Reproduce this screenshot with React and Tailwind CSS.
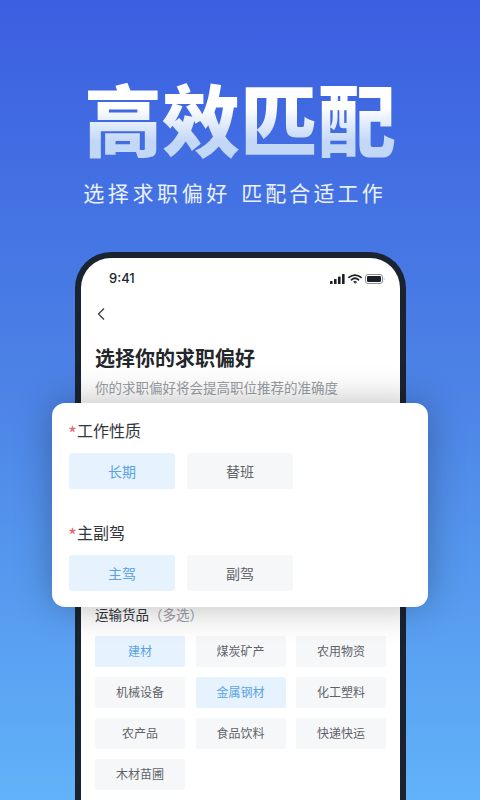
const FONT = "font-['Noto_Sans_CJK_SC','Noto_Sans',sans-serif]"

const cx = (...xs) => xs.filter(Boolean).join(' ')

const goods = [
  { name: '建材', on: true },
  { name: '煤炭矿产' },
  { name: '农用物资' },
  { name: '机械设备' },
  { name: '金属钢材', on: true },
  { name: '化工塑料' },
  { name: '农产品' },
  { name: '食品饮料' },
  { name: '快递快运' },
  { name: '木材苗圃' },
]

function StatusIcons() {
  return (
    <div className="flex items-center gap-[3px]">
      <svg width="15" height="10" viewBox="0 0 15 10" fill="#1a1f28">
        <rect x="0" y="7" width="2.6" height="3" rx="0.6" />
        <rect x="4" y="5" width="2.6" height="5" rx="0.6" />
        <rect x="8" y="2.5" width="2.6" height="7.5" rx="0.6" />
        <rect x="12" y="0" width="2.6" height="10" rx="0.6" />
      </svg>
      <svg width="14" height="10" viewBox="0 0 14 10" fill="none" stroke="#1a1f28" strokeLinecap="round">
        <path d="M1 3.4C4.4 0.3 9.6 0.3 13 3.4" strokeWidth="1.7" />
        <path d="M3.4 5.8C5.5 4 8.5 4 10.6 5.8" strokeWidth="1.7" />
        <path d="M7 9.2L5.6 7.8C6.4 7.2 7.6 7.2 8.4 7.8Z" fill="#1a1f28" strokeWidth="0.6" />
      </svg>
      <svg width="20" height="10" viewBox="0 0 20 10">
        <rect x="0.5" y="0.5" width="17" height="9" rx="2.5" fill="none" stroke="#8b8f96" />
        <rect x="2" y="2" width="14" height="6" rx="1.2" fill="#1a1f28" />
        <path d="M18.8 3.5C19.5 3.8 19.5 6.2 18.8 6.5Z" fill="#8b8f96" />
      </svg>
    </div>
  )
}

function Choice({ label, on }) {
  return (
    <div
      className={cx(
        'w-[106px] h-9 rounded-[3px] flex items-center justify-center text-[14px]',
        on ? 'bg-[#e6f2fe] text-[#5aa2e4]' : 'bg-[#f6f7f9] text-[#5f6368]'
      )}
    >
      {label}
    </div>
  )
}

function PrefGroup({ title, options }) {
  return (
    <div>
      <div className="h-[18px] flex items-center text-[16px] text-[#33363b] leading-none">
        <span className="text-[#e2686c] w-2 text-[19px] leading-none pt-[5px] -ml-[1px] mr-[1px]">*</span>
        {title}
      </div>
      <div className="mt-[14px] flex gap-3">
        {options.map((o) => (
          <Choice key={o.label} label={o.label} on={o.on} />
        ))}
      </div>
    </div>
  )
}

export default function App() {
  return (
    <div className={cx(FONT, 'relative w-[480px] h-[800px] overflow-hidden bg-gradient-to-b from-[#3c5ee0] via-[#4d84e6] to-[#62b2f9]')}>
      <div className="pt-[68px] flex flex-col items-center">
        <h1 className="h-[98px] w-full text-center text-[78px] leading-[98px] font-black text-transparent bg-clip-text bg-gradient-to-b from-white from-40% to-[#c3d7f6] to-75%">
          高效匹配
        </h1>
        <div className="mt-[12px] pr-[11px] h-[28px] text-[21px] leading-[28px] tracking-[3.6px] text-[#eaf1fd] whitespace-pre">
          选择求职偏好 <span className="ml-[2px] tracking-[3.1px]">匹配合适工作</span>
        </div>
      </div>

      <div className="mt-[46px] ml-[75px] w-[331px] h-[600px] rounded-t-[36px] border-[6px] border-b-0 border-[#1a2330] bg-white">
        <div className="pl-[28px] pr-[15px] pt-[10px] flex items-center justify-between h-[32px]">
          <span className="text-[13px] font-medium text-[#22262c] font-['Inter',sans-serif]">9:41</span>
          <StatusIcons />
        </div>
        <div className="mt-[17px] ml-[14px]">
          <svg width="12" height="14" viewBox="0 0 12 14" fill="none" stroke="#3a3d42" strokeWidth="1.3">
            <path d="M9 1.5L3.5 7L9 12.5" />
          </svg>
        </div>
        <div className="mt-[23px] ml-[14px] text-[20px] leading-[28px] font-bold text-[#23262b]">选择你的求职偏好</div>
        <div className="mt-[5px] ml-[14px] text-[13.5px] leading-[20px] text-[#9a9ea5] whitespace-nowrap">
          你的求职偏好将会提高职位推荐的准确度
        </div>

        <div className="mt-[207px] ml-[14px] text-[13.5px] leading-[20px] text-[#33363b]">
          运输货品<span className="text-[#9a9ea5]">（多选）</span>
        </div>
        <div className="mt-[12px] ml-[14px] w-[291px] grid grid-cols-3 gap-x-[10.5px] gap-y-[10.5px]">
          {goods.map((g) => (
            <div
              key={g.name}
              className={cx(
                'h-[30.5px] rounded-[2px] flex items-center justify-center text-[12px]',
                g.on ? 'bg-[#e6f2fe] text-[#5aa2e4]' : 'bg-[#f6f7f9] text-[#5f6368]'
              )}
            >
              {g.name}
            </div>
          ))}
        </div>
      </div>

      <div className="absolute left-[52px] top-[403px] w-[376px] h-[204px] rounded-[13px] bg-white px-[17px] pt-[18px] shadow-[0_0_36px_rgba(0,0,0,0.28)]">
        <PrefGroup title="工作性质" options={[{ label: '长期', on: true }, { label: '替班' }]} />
        <div className="mt-[34px]">
          <PrefGroup title="主副驾" options={[{ label: '主驾', on: true }, { label: '副驾' }]} />
        </div>
      </div>
    </div>
  )
}
